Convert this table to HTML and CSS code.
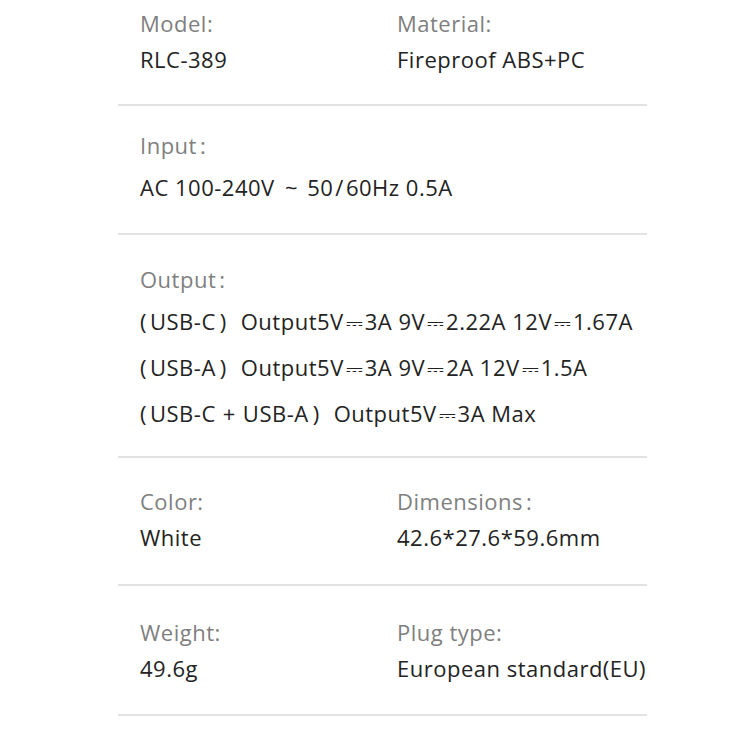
FILE: index.html
```html
<!DOCTYPE html>
<html>
<head>
<meta charset="utf-8">
<link rel="stylesheet" href="styles.css">
</head>
<body>
<div class="sheet">
  <section class="row first">
    <div class="cell">
      <div class="label">Model:</div>
      <div class="value">RLC-389</div>
    </div>
    <div class="cell">
      <div class="label">Material:</div>
      <div class="value">Fireproof ABS+PC</div>
    </div>
  </section>
  <section class="row wide">
    <div class="cell">
      <div class="label">Input<span class="c">:</span></div>
      <div class="value lead">AC 100-240V <span class="tl">~</span> 50<span class="sl">/</span>60Hz 0.5A</div>
    </div>
  </section>
  <section class="row wide multi">
    <div class="cell">
      <div class="label">Output<span class="c">:</span></div>
      <div class="value lead1"><span class="lp">(</span>USB-C<span class="rp">)</span>Output5V<span class="dc">⎓</span>3A 9V<span class="dc">⎓</span>2.22A 12V<span class="dc">⎓</span>1.67A</div>
      <div class="value"><span class="lp">(</span>USB-A<span class="rp">)</span>Output5V<span class="dc">⎓</span>3A 9V<span class="dc">⎓</span>2A 12V<span class="dc">⎓</span>1.5A</div>
      <div class="value"><span class="lp">(</span>USB-C<span class="plus">+</span>USB-A<span class="rp">)</span>Output5V<span class="dc">⎓</span>3A Max</div>
    </div>
  </section>
  <section class="row mid">
    <div class="cell">
      <div class="label">Color:</div>
      <div class="value">White</div>
    </div>
    <div class="cell">
      <div class="label">Dimensions<span class="c">:</span></div>
      <div class="value">42.6*27.6*59.6mm</div>
    </div>
  </section>
  <section class="row last">
    <div class="cell">
      <div class="label">Weight:</div>
      <div class="value">49.6g</div>
    </div>
    <div class="cell">
      <div class="label">Plug type:</div>
      <div class="value">European standard(EU)</div>
    </div>
  </section>
</div>
</body>
</html>
```
FILE: styles.css
```css
html, body {
  margin: 0;
  padding: 0;
  background: #ffffff;
}
body {
  font-family: "Open Sans", "Noto Sans", sans-serif;
  font-size: 22px;
  letter-spacing: 0.5px;
}
.sheet {
  width: 529px;
  margin-left: 118px;
}
.row {
  display: grid;
  grid-template-columns: 257px 1fr;
  padding: 28px 0 28px 22px;
  border-bottom: 2px solid #e2e2e2;
}
.row.first {
  padding-top: 5px;
  padding-bottom: 27px;
}
.row.wide {
  grid-template-columns: 1fr;
  padding-top: 21px;
  padding-bottom: 24px;
}
.row.multi {
  padding-top: 26px;
  padding-bottom: 20px;
}
.row.mid {
  padding-top: 25px;
  padding-bottom: 29px;
}
.row.last {
  padding-top: 28px;
  padding-bottom: 28px;
}
.label {
  color: #7f7f7f;
  line-height: 36px;
  height: 36px;
}
.value {
  color: #232323;
  line-height: 36px;
  height: 36px;
  white-space: nowrap;
}
.wide .value {
  line-height: 44px;
  height: 44px;
}
.multi .value {
  line-height: 46px;
  height: 46px;
}
.lead {
  margin-top: 2px;
}
.lead1 {
  margin-top: 1px;
}
.c {
  margin-left: 3px;
}
.tl {
  margin: 0 3px 0 4px;
}
.sl {
  margin: 0 2px;
}
.lp {
  margin-right: 3px;
}
.rp {
  margin-left: 4px;
  margin-right: 14px;
}
.plus {
  margin: 0 7px;
}
.dc {
  font-family: "DejaVu Sans", sans-serif;
  font-size: 21px;
  line-height: 1;
  letter-spacing: 0;
  margin: 0 2px;
}
```
